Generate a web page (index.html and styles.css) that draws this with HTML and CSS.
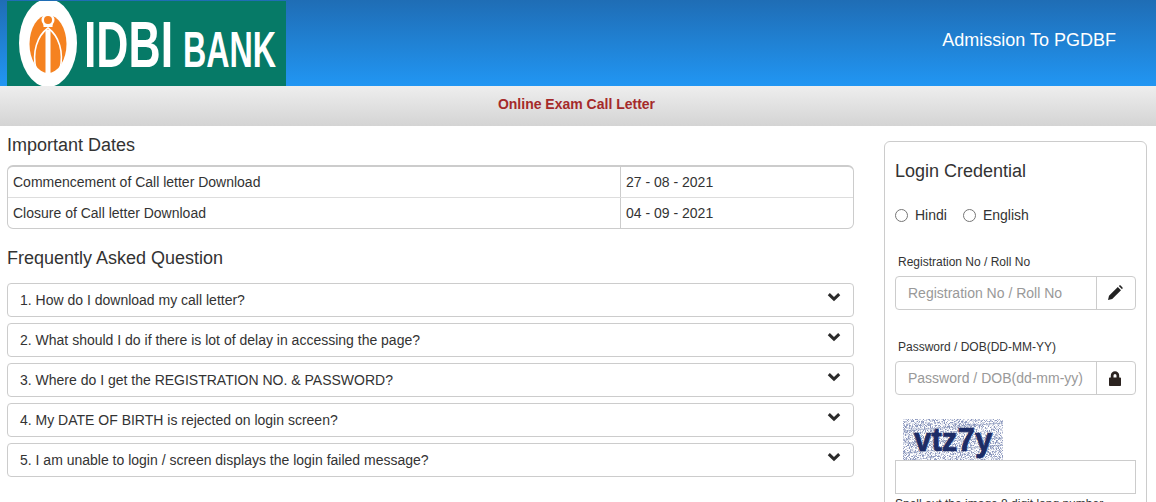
FILE: index.html
```html
<!DOCTYPE html>
<html lang="en">
<head>
<meta charset="utf-8">
<title>Online Exam Call Letter</title>
<link rel="stylesheet" href="styles.css">
</head>
<body>
<header class="top">
  <div class="logo">
    <svg class="logo-art" viewBox="7 1 279 85" width="279" height="85">
      <ellipse cx="48" cy="43" rx="29" ry="44" fill="#fff"/>
      <ellipse cx="48" cy="44" rx="18.500" ry="29" fill="#f58220"/>
      <path d="M36 69C32 52 37 36 48 28 59 36 64 52 60 69" fill="none" stroke="#fff" stroke-width="1.600"/>
      <rect x="45.500" y="30" width="5" height="44" fill="#fff"/>
      <path d="M42.500 12h11l-1 15h-9z" fill="#fff"/>
      <circle cx="48" cy="20" r="6.500" fill="#fff"/>
      <circle cx="48" cy="20" r="4" fill="#f58220"/>
      <text class="logo-idbi" transform="translate(84 67) scale(.685 1)">IDBI</text>
      <text class="logo-bank" transform="translate(183 67) scale(.645 1)">BANK</text>
    </svg>
  </div>
  <div class="top-title">Admission To PGDBF</div>
</header>
<div class="subbar">Online Exam Call Letter</div>
<main class="content">
  <section class="left">
    <h2 class="heading">Important Dates</h2>
    <div class="dates">
      <div class="date-row">
        <div class="date-name">Commencement of Call letter Download</div>
        <div class="date-value">27 - 08 - 2021</div>
      </div>
      <div class="date-row">
        <div class="date-name">Closure of Call letter Download</div>
        <div class="date-value">04 - 09 - 2021</div>
      </div>
    </div>
    <h2 class="heading faq-heading">Frequently Asked Question</h2>
    <div class="faq">
      <div class="faq-item"><span>1. How do I download my call letter?</span><svg class="chev" viewBox="0 0 14 10" width="14" height="10"><path d="M1.8 2.2 7 7.2l5.2-5" /></svg></div>
      <div class="faq-item"><span>2. What should I do if there is lot of delay in accessing the page?</span><svg class="chev" viewBox="0 0 14 10" width="14" height="10"><path d="M1.8 2.2 7 7.2l5.2-5" /></svg></div>
      <div class="faq-item"><span>3. Where do I get the REGISTRATION NO. &amp; PASSWORD?</span><svg class="chev" viewBox="0 0 14 10" width="14" height="10"><path d="M1.8 2.2 7 7.2l5.2-5" /></svg></div>
      <div class="faq-item"><span>4. My DATE OF BIRTH is rejected on login screen?</span><svg class="chev" viewBox="0 0 14 10" width="14" height="10"><path d="M1.8 2.2 7 7.2l5.2-5" /></svg></div>
      <div class="faq-item"><span>5. I am unable to login / screen displays the login failed message?</span><svg class="chev" viewBox="0 0 14 10" width="14" height="10"><path d="M1.8 2.2 7 7.2l5.2-5" /></svg></div>
    </div>
  </section>
  <aside class="login">
    <h3 class="login-title">Login Credential</h3>
    <div class="radios">
      <label class="radio"><span class="radio-dot"></span>Hindi</label>
      <label class="radio"><span class="radio-dot"></span>English</label>
    </div>
    <div class="field-label">Registration No / Roll No</div>
    <div class="input-group">
      <div class="input-text">Registration No / Roll No</div>
      <div class="input-addon">
        <svg viewBox="0 0 16 16" width="16" height="16"><path d="M1 15l1-4.200L10.800 2l3.200 3.200L5.200 14zM11.800 1l.6-.5c.4-.3.9-.3 1.200 0l1.900 1.900c.3.3.3.8 0 1.200l-.5.6z" fill="#222"/></svg>
      </div>
    </div>
    <div class="field-label second">Password / DOB(DD-MM-YY)</div>
    <div class="input-group">
      <div class="input-text">Password / DOB(dd-mm-yy)</div>
      <div class="input-addon">
        <svg viewBox="0 0 14 15" width="14" height="15"><path d="M2.800 6.500V4.500a4.200 4.200 0 0 1 8.400 0v2h1c.5 0 .8.3.8.8v6.900c0 .5-.3.8-.8.8H1.800c-.5 0-.8-.3-.8-.8V7.300c0-.5.3-.8.8-.8zm2.700 0h3V4.500a1.500 1.500 0 0 0-3 0z" fill="#2b2320"/></svg>
      </div>
    </div>
    <div class="captcha">
      <svg viewBox="0 0 100 41" width="100" height="41">
        <defs>
          <filter id="noise" x="0" y="0" width="100%" height="100%">
            <feTurbulence type="fractalNoise" baseFrequency="1.2" numOctaves="1" seed="4"/>
            <feColorMatrix values="0 0 0 0 0.25  0 0 0 0 0.3  0 0 0 0 0.5  4 4 0 0 -3.700"/>
          </filter>
        </defs>
        <rect width="100" height="41" fill="#fff"/>
        <rect width="100" height="41" filter="url(#noise)"/>
        <path d="M0 12 100 4M0 24l100-5M0 34l100-8" stroke="#8a97bb" stroke-width="1.200" fill="none" opacity=".6"/>
        <text class="captcha-text" transform="translate(11 32) scale(.95 1)">vtz7y</text>
      </svg>
    </div>
    <div class="captcha-input"></div>
    <div class="captcha-help">Spell out the image 8 digit long number</div>
  </aside>
</main>
</body>
</html>
```
FILE: styles.css
```css
* { box-sizing: border-box; }
html, body { margin: 0; padding: 0; height: 502px; overflow: hidden; background: #fff; }
body { font-family: "Liberation Sans", Arial, sans-serif; color: #333; font-size: 14px; }

.top {
  height: 86px;
  padding: 1px 40px 0 7px;
  display: flex;
  justify-content: space-between;
  align-items: flex-start;
  background: linear-gradient(to bottom, #1f6db5, #2196f3);
}
.logo { width: 279px; height: 85px; background: #067a67; overflow: hidden; }
.logo-art { display: block; }
.logo-idbi { font-family: "Liberation Sans", sans-serif; font-weight: bold; font-size: 65px; fill: #fff; }
.logo-bank { font-family: "Liberation Sans", sans-serif; font-weight: bold; font-size: 50px; fill: #fff; }
.top-title { color: #fff; font-size: 18px; line-height: 20px; margin-top: 29px; }

.subbar {
  height: 40px;
  padding-right: 3px;
  background: linear-gradient(to bottom, #eeeeee, #d4d4d4);
  color: #a52a2a;
  font-weight: bold;
  font-size: 14px;
  line-height: 36px;
  text-align: center;
}

.content { display: flex; align-items: flex-start; padding: 0 9px 0 7px; }
.left { width: 847px; flex: none; }

.heading { margin: 0; font-weight: normal; font-size: 18px; line-height: 20px; color: #333; padding-top: 9px; height: 39px; }
.faq-heading { padding-top: 19px; height: 54px; }

.dates { border: 1px solid #ccc; border-radius: 6px; border-top-width: 2px; }
.date-row { display: flex; height: 30px; align-items: center; }
.date-row + .date-row { border-top: 1px solid #ddd; height: 31px; }
.date-name { width: 613px; padding-left: 5px; line-height: 30px; border-right: 1px solid #ccc; }
.date-value { padding-left: 5px; line-height: 30px; }

.faq { display: flex; flex-direction: column; gap: 6px; }
.faq-item {
  height: 34px;
  border: 1px solid #ccc;
  border-radius: 4px;
  padding: 0 12px;
  display: flex;
  align-items: center;
  justify-content: space-between;
}
.chev { margin-top: -7px; }
.chev path { fill: none; stroke: #2b2b2b; stroke-width: 3; }

.login {
  margin: 15px 0 0 30px;
  width: 263px;
  height: 400px;
  flex: none;
  border: 1px solid #ccc;
  border-radius: 6px;
  padding: 0 10px;
}
.login-title { margin: 0; font-weight: normal; font-size: 18px; line-height: 20px; padding-top: 19px; height: 39px; }
.radios { display: flex; gap: 16px; margin-top: 24px; height: 20px; align-items: center; }
.radio { display: flex; align-items: center; gap: 7px; }
.radio-dot { width: 13px; height: 13px; border: 1px solid #767676; border-radius: 50%; }
.field-label { font-size: 12px; line-height: 14px; margin: 30px 0 0 3px; color: #333; }
.field-label.second { margin-top: 30px; }
.input-group { display: flex; height: 34px; margin-top: 7px; border: 1px solid #ccc; border-radius: 4px; width: 241px; }
.input-text { flex: 1; padding-left: 12px; color: #999; line-height: 32px; white-space: nowrap; }
.input-addon { width: 39px; padding-right: 2px; border-left: 1px solid #ccc; display: flex; align-items: center; justify-content: center; }
.captcha { margin: 24px 0 0 8px; height: 41px; }
.captcha svg { display: block; }
.captcha-text { font-family: "Liberation Sans", sans-serif; font-weight: bold; font-size: 33px; fill: #1c2c66; stroke: #1c2c66; stroke-width: .7px; }
.captcha-input { height: 34px; border: 1px solid #ccc; width: 241px; }
.captcha-help { font-size: 12px; line-height: 14px; margin-top: 3px; white-space: nowrap; }
```
